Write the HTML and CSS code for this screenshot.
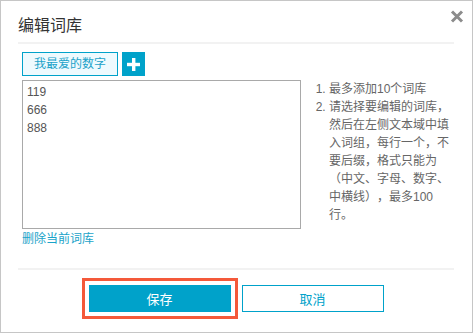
FILE: index.html
```html
<!DOCTYPE html>
<html lang="zh-CN">
<head>
    <meta charset="UTF-8">
    <title>编辑词库</title>
    <link rel="stylesheet" href="styles.css">
</head>
<body>
    <div class="dialog">
        <div class="dialog-header">
            <h2 class="dialog-title">编辑词库</h2>
            <button class="close-btn" title="关闭">
                <svg width="14" height="13" viewBox="0 0 14 13">
                    <path d="M2 1.5 L12 11.5 M12 1.5 L2 11.5" stroke="#8c8c8c" stroke-width="3" fill="none"/>
                </svg>
            </button>
        </div>

        <div class="dialog-body">
            <div class="tab-row">
                <span class="tab active">我最爱的数字</span>
                <button class="add-btn" title="添加词库">
                    <svg width="13" height="13" viewBox="0 0 13 13">
                        <rect x="5" y="0" width="3.4" height="13" fill="#fff"/>
                        <rect x="0" y="4.8" width="13" height="3.4" fill="#fff"/>
                    </svg>
                </button>
            </div>

            <div class="editor-row">
                <textarea class="words" spellcheck="false">119
666
888</textarea>
                <ol class="tips">
                    <li>最多添加10个词库</li>
                    <li>请选择要编辑的词库，然后在左侧文本域中填入词组，每行一个，不要后缀，格式只能为（中文、字母、数字、中横线），最多100行。</li>
                </ol>
            </div>

            <a href="#" class="delete-link">删除当前词库</a>
        </div>

        <div class="dialog-footer">
            <button class="btn btn-primary">保存</button>
            <button class="btn btn-default">取消</button>
        </div>
    </div>
</body>
</html>
```

FILE: styles.css
```css
body {
    margin: 0;
    font-family: "Liberation Sans", "Noto Sans CJK SC", sans-serif;
    background-color: #fff;
}
.dialog {
    width: 473px;
    height: 333px;
    box-sizing: border-box;
    border: 1px solid #c6c6c6;
    padding: 0 18px 0 17px;
    background: #fff;
}
.dialog-header {
    display: flex;
    justify-content: space-between;
    align-items: flex-start;
    height: 43px;
    padding-top: 15px;
    box-sizing: border-box;
    border-bottom: 2px solid #f2f2f2;
}
.dialog-title {
    margin: 0;
    font-size: 16px;
    line-height: 20px;
    font-weight: normal;
    color: #333;
}
.close-btn {
    margin: -6px -10px 0 0;
    padding: 0;
    border: none;
    background: none;
    cursor: pointer;
    line-height: 0;
}
.dialog-body {
    padding: 8px 4px 0;
}
.tab-row {
    display: flex;
    gap: 4px;
    height: 24px;
}
.tab {
    width: 96px;
    box-sizing: border-box;
    border: 1px solid #00a2ca;
    background: #eefafe;
    color: #1ba2c9;
    font-size: 12px;
    line-height: 22px;
    text-align: center;
}
.add-btn {
    width: 23px;
    height: 24px;
    padding: 0;
    border: none;
    background: #00a2ca;
    cursor: pointer;
    display: flex;
    align-items: center;
    justify-content: center;
}
.editor-row {
    display: flex;
    margin-top: 4px;
}
.words {
    width: 279px;
    height: 149px;
    box-sizing: border-box;
    margin: 0;
    padding: 2px 4px;
    border: 1px solid #a9a9a9;
    border-radius: 0;
    resize: none;
    font-family: "Liberation Sans", "Noto Sans CJK SC", sans-serif;
    font-size: 12px;
    line-height: 18px;
    color: #555;
    outline: none;
}
.tips {
    flex: 1;
    margin: 0;
    padding-left: 28px;
    font-size: 12px;
    line-height: 18px;
    color: #666;
    text-spacing-trim: space-all;
}
.delete-link {
    display: inline-block;
    margin-top: 1px;
    font-size: 12px;
    line-height: 18px;
    color: #1aa3c9;
    text-decoration: none;
}
.dialog-footer {
    display: flex;
    justify-content: center;
    gap: 11px;
    margin-top: 20px;
    padding-top: 15px;
    border-top: 2px solid #f2f2f2;
}
.btn {
    width: 142px;
    height: 27px;
    box-sizing: border-box;
    font-family: "Liberation Sans", "Noto Sans CJK SC", sans-serif;
    font-size: 13px;
    cursor: pointer;
}
.btn-primary {
    border: none;
    background: #00a2ca;
    color: #fff;
    outline: 3px solid #f4593a;
    outline-offset: 4px;
}
.btn-default {
    border: 1px solid #00a2ca;
    background: #fff;
    color: #00a2ca;
}
```
